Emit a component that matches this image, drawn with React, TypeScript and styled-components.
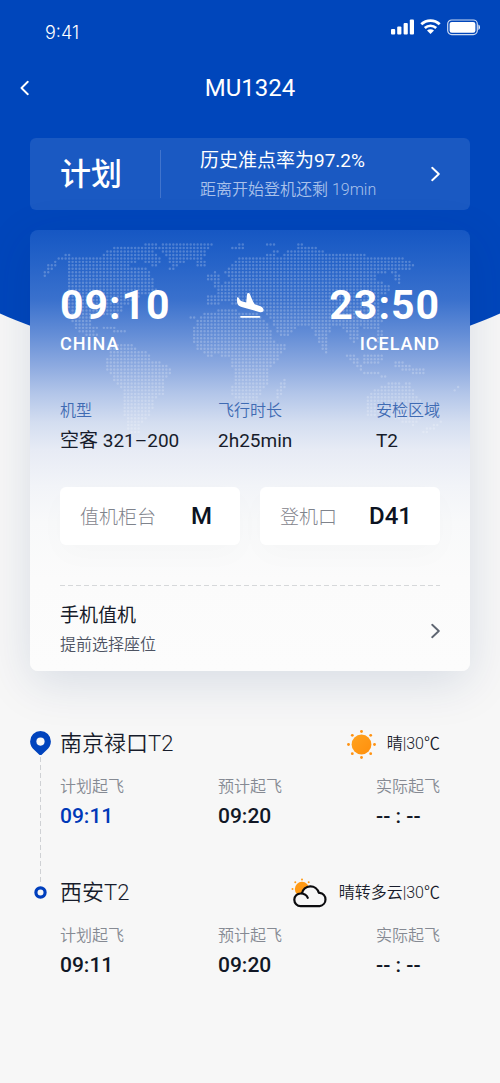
import React from "react";
import styled, { createGlobalStyle } from "styled-components";

const sans = `Roboto, "Noto Sans CJK SC", sans-serif`;

const GlobalStyle = createGlobalStyle`
  *, *::before, *::after { box-sizing: border-box; }
  body {
    margin: 0;
    background: #f7f7f7;
    color: #171c2b;
    font-family: ${sans};
  }
  h1, h2, p, dl, dd, ol { margin: 0; padding: 0; }
  button { border: 0; padding: 0; background: none; color: inherit; font: inherit; text-align: left; cursor: pointer; }
`;

const Page = styled.div`
  position: relative;
  min-height: 100vh;
  overflow: hidden;
  padding-bottom: 60px;
`;

const Backdrop = styled.div`
  position: absolute;
  inset: 0 0 auto 0;
  height: 367px;
  overflow: hidden;
  &::before {
    content: "";
    position: absolute;
    left: -72%;
    bottom: 0;
    width: 244%;
    height: 1220px;
    border-radius: 50%;
    background: #0046bb;
  }
`;

const Content = styled.div`
  position: relative;
`;

const StatusBar = styled.div`
  display: flex;
  justify-content: space-between;
  align-items: flex-start;
  height: 68px;
  padding: 16px 20px 0 45px;
  color: #fff;
`;

const Clock = styled.time`
  padding-top: 5px;
  font: 300 18px/24px Inter, sans-serif;
`;

const StatusIcons = styled.div`
  display: flex;
  align-items: center;
  gap: 6px;
  height: 22px;
`;

const NavBar = styled.header`
  display: grid;
  grid-template-columns: 40px 1fr 40px;
  align-items: center;
  height: 40px;
  padding: 0 20px;
  color: #fff;
`;

const NavTitle = styled.h1`
  text-align: center;
  font: 400 24px/40px ${sans};
`;

const IconButton = styled.button`
  display: flex;
  align-items: center;
  height: 40px;
`;

const Main = styled.main`
  padding: 30px 30px 0;
`;

const PlanCard = styled.button`
  display: flex;
  align-items: center;
  width: 100%;
  height: 72px;
  padding: 0 30px;
  border-radius: 6px;
  background: #1a59c2;
  color: #fff;
`;

const PlanTitle = styled.strong`
  padding-top: 2px;
  font-size: 31px;
  line-height: 40px;
  font-weight: 500;
`;

const PlanDivider = styled.span`
  width: 1px;
  height: 48px;
  margin: 0 39px 0 38px;
  background: #4174cd;
`;

const TextStack = styled.span`
  display: flex;
  flex: 1;
  flex-direction: column;
  gap: 5px;
`;

const PlanText = styled(TextStack)`
  padding-top: 2px;
`;

const LineTitle = styled.span`
  font-size: 19px;
  line-height: 24px;
  font-weight: 400;
`;

const LineNote = styled.span<{ $color: string }>`
  font-size: 16px;
  line-height: 24px;
  font-weight: 350;
  color: ${(p) => p.$color};
`;

const FlightCard = styled.section`
  position: relative;
  margin-top: 20px;
  padding: 50px 30px 0;
  border-radius: 8px;
  background: linear-gradient(
    180deg,
    #1657c3 0,
    #2160c7 24px,
    #3a71cd 70px,
    #668fd7 106px,
    #8daae0 136px,
    #b3c6e9 164px,
    #d3ddf0 192px,
    #e7ebf5 220px,
    #f2f4f8 256px,
    #f8f9fa 292px,
    #fbfbfb 350px,
    #fcfcfc 100%
  );
  box-shadow: 0 12px 48px rgba(10, 45, 105, 0.13);
`;

const MapArt = styled.svg`
  position: absolute;
  top: 0;
  left: 0;
  width: 100%;
`;

const Route = styled.div`
  position: relative;
  display: grid;
  grid-template-columns: 1fr auto 1fr;
  color: #fff;
`;

const Endpoint = styled.div<{ $end?: boolean }>`
  display: flex;
  flex-direction: column;
  gap: 1px;
  align-items: ${(p) => (p.$end ? "flex-end" : "flex-start")};
`;

const RouteTime = styled.time`
  font: 700 41px/50px ${sans};
  letter-spacing: 1px;
`;

const Country = styled.span`
  font: 500 18px/26px ${sans};
  letter-spacing: 1px;
`;

const PlaneBox = styled.div`
  display: flex;
  align-items: center;
  height: 50px;
`;

const Columns = styled.dl`
  position: relative;
  display: grid;
  grid-template-columns: 1fr 1fr 64px;
`;

const FlightFacts = styled(Columns)`
  margin-top: 42px;
`;

const Fact = styled.div<{ $gap: number }>`
  display: flex;
  flex-direction: column;
  gap: ${(p) => p.$gap}px;
  white-space: nowrap;
`;

const FactLabel = styled.dt<{ $color: string }>`
  font-size: 16px;
  line-height: 24px;
  font-weight: 350;
  color: ${(p) => p.$color};
`;

const FactValue = styled.dd`
  font-size: 19px;
  line-height: 24px;
  font-weight: 400;
`;

const FactTime = styled.dd<{ $active?: boolean }>`
  font: 500 21px/24px ${sans};
  color: ${(p) => (p.$active ? "#0038b8" : "#111726")};
`;

const Tiles = styled.dl`
  position: relative;
  display: grid;
  grid-template-columns: 1fr 1fr;
  gap: 20px;
  margin-top: 34px;
`;

const Tile = styled.div`
  display: flex;
  align-items: center;
  justify-content: space-between;
  height: 58px;
  padding: 0 28px 0 20px;
  border-radius: 6px;
  background: #fff;
  box-shadow: 0 10px 30px rgba(0, 0, 0, 0.02);
`;

const TileLabel = styled.dt`
  padding-top: 4px;
  font-size: 19px;
  line-height: 24px;
  font-weight: 300;
  color: #7f838c;
`;

const TileValue = styled.dd`
  font: 500 24px/32px ${sans};
  color: #0c1322;
`;

const DashedRule = styled.hr`
  height: 1px;
  margin: 40px 0 0;
  border: 0;
  background: repeating-linear-gradient(90deg, #d6d8da 0 5px, transparent 5px 8px);
`;

const CheckInButton = styled.button`
  display: flex;
  align-items: center;
  width: 100%;
  padding: 18px 0 14px;
`;

const Stops = styled.ol`
  margin-top: 57px;
  padding-right: 30px;
  list-style: none;
`;

const Stop = styled.li`
  display: grid;
  grid-template-columns: 21px 1fr;
  column-gap: 9px;
`;

const Rail = styled.div<{ $top: number }>`
  display: flex;
  flex-direction: column;
  align-items: center;
  padding-top: ${(p) => p.$top}px;
`;

const RailLine = styled.span`
  flex: 1;
  width: 1px;
  margin: 2px 0 -8px;
  background: repeating-linear-gradient(180deg, #cfd1d4 0 5px, transparent 5px 8px);
`;

const StopBody = styled.div<{ $last: boolean }>`
  padding-bottom: ${(p) => (p.$last ? 0 : 49)}px;
`;

const StopHead = styled.div`
  display: flex;
  align-items: center;
  justify-content: space-between;
  height: 32px;
  margin-bottom: 15px;
`;

const StopName = styled.h2`
  font-size: 22px;
  line-height: 32px;
  font-weight: 350;
`;

const Weather = styled.p`
  display: flex;
  align-items: center;
  gap: 11px;
  font-size: 16px;
  line-height: 24px;
  font-weight: 350;
`;

/* Outlines of the land areas; each one is filled with grid dots. */
const land: string[] = [
  "30,162 40,138 60,115 85,95 115,85 130,92 215,94 225,78 265,63 340,62 345,53 382,53 385,70 370,80 395,105 395,118 370,128 350,112 325,102 300,125 310,130 345,128 360,145 372,162 382,200 350,212 335,205 325,220 300,235 285,245 270,262 272,285 258,280 240,268 200,270 185,285 190,305 205,300 205,315 195,320 205,335 165,332 145,318 130,300 122,285 115,235 113,100 85,108 65,140 48,158",
  "385,62 400,55 548,54 530,78 525,98 490,105 455,112 438,134 412,134 425,120 408,95 385,75",
  "498,106 528,106 528,126 498,124",
  "603,64 622,64 625,54 643,54 643,74 603,74",
  "212,304 240,304 290,314 290,326 262,324 235,312 212,312",
  "235,362 275,354 305,357 320,372 358,382 365,402 425,428 426,448 402,470 402,505 378,522 366,560 348,580 335,602 328,630 300,632 285,590 280,500 255,470 228,435 228,405 240,390",
  "532,152 552,138 572,150 568,178 532,170",
  "532,210 575,208 575,240 532,240",
  "480,270 498,270 498,282 480,282",
  "490,352 492,300 525,262 545,262 575,246 600,248 625,258 660,262 695,268 715,300 735,350 768,356 768,370 745,400 720,430 716,482 698,492 680,528 640,546 625,522 603,515 612,440 600,400 560,388 535,398 505,375",
  "583,140 605,115 625,95 690,93 720,85 750,92 775,74 840,62 870,72 900,84 960,84 1010,90 1040,90 1100,94 1130,104 1158,118 1150,128 1130,136 1100,132 1112,152 1110,178 1092,165 1082,140 1050,145 1032,160 1075,178 1082,198 1060,208 1045,225 1056,292 1032,315 990,308 985,345 970,355 955,330 930,305 912,300 898,325 892,385 876,378 862,345 846,312 820,302 800,300 792,325 755,340 735,312 715,275 690,255 640,245 610,240 575,225 560,205 552,182 600,165 590,150",
  "705,54 740,54 740,64 715,64",
  "800,54 818,54 818,64 800,64",
  "718,90 730,75 750,72 750,84",
  "945,388 965,385 990,410 1000,438 1070,446 1070,458 1000,448 970,420",
  "1002,392 1045,382 1064,386 1062,404 1045,422 1002,416",
  "1038,302 1052,302 1062,350 1058,368 1042,348",
  "1096,410 1120,412 1150,430 1188,428 1180,452 1140,442 1096,426",
  "1008,512 1040,490 1080,468 1112,474 1124,492 1132,456 1148,490 1178,535 1178,575 1150,602 1112,592 1060,565 1008,578",
  "740,518 742,490 762,458 770,474 758,512",
  "1166,624 1200,604 1236,584 1240,594 1180,630",
  "1264,500 1278,480 1292,480 1276,500",
];

const shapes = land.map((s) => s.split(" ").map((p) => p.split(",").map(Number)));

function inside(x: number, y: number, shape: number[][]) {
  let hit = false;
  for (let i = 0, j = shape.length - 1; i < shape.length; j = i++) {
    const [xi, yi] = shape[i];
    const [xj, yj] = shape[j];
    if (yi > y !== yj > y && x < ((xj - xi) * (y - yi)) / (yj - yi) + xi) hit = !hit;
  }
  return hit;
}

function buildDots() {
  const step = 10.42;
  let d = "";
  for (let r = 0; r < 57; r++) {
    for (let c = 0; c < 124; c++) {
      const x = 34 + c * step;
      const y = 58.5 + r * step;
      if (shapes.some((s) => inside(x, y, s))) d += `M${x.toFixed(1)} ${y.toFixed(1)}h0`;
    }
  }
  return d;
}

const dots = buildDots();

const WorldMap = () => (
  <MapArt viewBox="0 15 1320 660" aria-hidden="true">
    <path d={dots} stroke="#fff" strokeOpacity="0.22" strokeWidth="7.4" strokeLinecap="round" />
  </MapArt>
);

const Chevron = ({ left, color }: { left?: boolean; color: string }) => (
  <svg width="9" height="16" viewBox="0 0 9 16" fill="none" aria-hidden="true">
    <path
      d={left ? "M7.8 1.8 1.5 8l6.3 6.2" : "M1.2 1.8 7.8 8l-6.6 6.2"}
      stroke={color}
      strokeWidth="1.9"
      strokeLinecap="round"
      strokeLinejoin="round"
    />
  </svg>
);

const Signal = () => (
  <svg width="23" height="16" viewBox="0 0 23 16" fill="#fff" aria-hidden="true">
    <rect x="0" y="10" width="4.2" height="5.5" rx="1" />
    <rect x="6.2" y="7.5" width="4.2" height="8" rx="1" />
    <rect x="12.6" y="4" width="4.2" height="11.5" rx="1" />
    <rect x="18.8" y="0.5" width="4.2" height="15" rx="1" />
  </svg>
);

const Wifi = () => (
  <svg width="21" height="16" viewBox="0 0 21 16" fill="none" stroke="#fff" aria-hidden="true">
    <path d="M1.3 5.3a13.2 13.2 0 0 1 18.4 0" strokeWidth="2.7" />
    <path d="M4.8 9a8.2 8.2 0 0 1 11.4 0" strokeWidth="2.6" />
    <path d="M7 11.6a5 5 0 0 1 7 0L10.5 15z" fill="#fff" stroke="none" />
  </svg>
);

const Battery = () => (
  <svg width="33" height="17" viewBox="0 0 33 17" aria-hidden="true">
    <rect x="0.7" y="1" width="29.6" height="14.6" rx="4" fill="none" stroke="#fff" strokeOpacity="0.8" strokeWidth="1.2" />
    <rect x="2.6" y="2.9" width="25.8" height="10.8" rx="2.2" fill="#fff" />
    <path d="M31.4 5.5c1 .5 1.6 1.5 1.6 2.8s-.6 2.3-1.6 2.8z" fill="#fff" fillOpacity="0.9" />
  </svg>
);

const Plane = () => (
  <svg width="28" height="28" viewBox="0 0 28 28" fill="#fff" aria-hidden="true">
    <path d="M1 6.2 2.9 6.8C3.5 8.5 4.3 9.7 5.8 10.3L10.2 11.4 11.1 3.2C11.3 1.700 13.300 1.700 14 3.200 15.300 6.600 16.800 10.200 18.700 13.300L24.500 15.300C26.600 16.200 27.700 17.700 27.600 19.200 27.400 21 25.600 21.500 23.200 20.900L6.500 16.300C3.200 15.400 1.300 13.800 1.100 11.200z" />
    <rect x="4.2" y="25" width="20" height="1.8" rx="0.8" />
  </svg>
);

const Pin = () => (
  <svg width="21" height="24" viewBox="0 0 21 24" aria-hidden="true">
    <path d="M10.5 0a10.4 10.4 0 0 1 10.4 10.4c0 3.7-1.9 6.5-4.5 8.9l-4.2 4a2.4 2.4 0 0 1-3.4 0l-4.2-4C2 16.9.1 14.1.1 10.4A10.4 10.4 0 0 1 10.5 0z" fill="#0043bd" />
    <circle cx="10.5" cy="10.6" r="4.1" fill="#f7f7f7" />
  </svg>
);

const Ring = () => (
  <svg width="13" height="13" viewBox="0 0 13 13" aria-hidden="true">
    <circle cx="6.5" cy="6.5" r="4.6" fill="#f7f7f7" stroke="#003fbd" strokeWidth="3.2" />
  </svg>
);

const rays = [0, 1, 2, 3, 4, 5, 6, 7].map((i) => (i * Math.PI) / 4);

const Sun = () => (
  <svg width="29" height="29" viewBox="0 0 29 29" aria-hidden="true">
    <defs>
      <linearGradient id="sunFill" x1="0" y1="0" x2="1" y2="1">
        <stop offset="0" stopColor="#ffa31f" />
        <stop offset="1" stopColor="#ff8f0c" />
      </linearGradient>
    </defs>
    <circle cx="14.5" cy="14.5" r="9.9" fill="url(#sunFill)" />
    {rays.map((a) => (
      <circle key={a} cx={14.5 + 13 * Math.cos(a)} cy={14.5 + 13 * Math.sin(a)} r="1.4" fill="#ff9212" />
    ))}
  </svg>
);

const SunCloud = () => (
  <svg width="37" height="30" viewBox="0 0 37 30" aria-hidden="true">
    <circle cx="11" cy="11" r="7.2" fill="#ff9914" />
    {rays.slice(4).map((a) => (
      <circle key={a} cx={11 + 9.5 * Math.cos(a)} cy={11 + 9.5 * Math.sin(a)} r="1" fill="#ff9914" />
    ))}
    <path
      d="M16.8 19.8c-1.2-2.9-4-4.3-7.2-4.3a6.3 6.3 0 0 0 0 12.6h19a6.7 6.7 0 0 0 0-13.3h-.8A8.6 8.6 0 0 0 11 15.4"
      fill="#f7f7f7"
    />
    <path
      d="M16.800 19.800c-1.200-2.900-4-4.300-7.200-4.300a6.300 6.300 0 0 0 0 12.600h19a6.700 6.700 0 0 0 0-13.300h-.8A8.600 8.600 0 0 0 11 15.400"
      fill="none"
      stroke="#0c0c0f"
      strokeWidth="2.2"
      strokeLinecap="round"
      strokeLinejoin="round"
    />
  </svg>
);

const flightFacts = [
  ["机型", "空客 321–200"],
  ["飞行时长", "2h25min"],
  ["安检区域", "T2"],
];

const stops = [
  { name: "南京禄口T2", weather: "晴|30℃", icon: <Sun />, active: true },
  { name: "西安T2", weather: "晴转多云|30℃", icon: <SunCloud />, active: false },
];

const stopTimes = [
  ["计划起飞", "09:11"],
  ["预计起飞", "09:20"],
  ["实际起飞", "-- : --"],
];

export default function App() {
  return (
    <Page>
      <GlobalStyle />
      <Backdrop />
      <Content>
        <StatusBar>
          <Clock>9:41</Clock>
          <StatusIcons>
            <Signal />
            <Wifi />
            <Battery />
          </StatusIcons>
        </StatusBar>
        <NavBar>
          <IconButton type="button" aria-label="返回">
            <Chevron left color="#fff" />
          </IconButton>
          <NavTitle>MU1324</NavTitle>
        </NavBar>
        <Main>
          <PlanCard type="button">
            <PlanTitle>计划</PlanTitle>
            <PlanDivider />
            <PlanText>
              <LineTitle>历史准点率为97.2%</LineTitle>
              <LineNote $color="#a9c1ea">距离开始登机还剩 19min</LineNote>
            </PlanText>
            <Chevron color="#fff" />
          </PlanCard>

          <FlightCard>
            <WorldMap />
            <Route>
              <Endpoint>
                <RouteTime>09:10</RouteTime>
                <Country>CHINA</Country>
              </Endpoint>
              <PlaneBox>
                <Plane />
              </PlaneBox>
              <Endpoint $end>
                <RouteTime>23:50</RouteTime>
                <Country>ICELAND</Country>
              </Endpoint>
            </Route>
            <FlightFacts>
              {flightFacts.map(([label, value]) => (
                <Fact key={label} $gap={6}>
                  <FactLabel $color="#3f6bb3">{label}</FactLabel>
                  <FactValue>{value}</FactValue>
                </Fact>
              ))}
            </FlightFacts>
            <Tiles>
              <Tile>
                <TileLabel>值机柜台</TileLabel>
                <TileValue>M</TileValue>
              </Tile>
              <Tile>
                <TileLabel>登机口</TileLabel>
                <TileValue>D41</TileValue>
              </Tile>
            </Tiles>
            <DashedRule />
            <CheckInButton type="button">
              <TextStack>
                <LineTitle>手机值机</LineTitle>
                <LineNote $color="#4d5362">提前选择座位</LineNote>
              </TextStack>
              <Chevron color="#5f6672" />
            </CheckInButton>
          </FlightCard>

          <Stops>
            {stops.map((stop, i) => {
              const last = i === stops.length - 1;
              return (
                <Stop key={stop.name}>
                  <Rail $top={last ? 9 : 3}>
                    {last ? <Ring /> : <Pin />}
                    {!last && <RailLine />}
                  </Rail>
                  <StopBody $last={last}>
                    <StopHead>
                      <StopName>{stop.name}</StopName>
                      <Weather>
                        {stop.icon}
                        <span>{stop.weather}</span>
                      </Weather>
                    </StopHead>
                    <Columns>
                      {stopTimes.map(([label, value], n) => (
                        <Fact key={label} $gap={5}>
                          <FactLabel $color="#868a93">{label}</FactLabel>
                          <FactTime $active={stop.active && n === 0}>{value}</FactTime>
                        </Fact>
                      ))}
                    </Columns>
                  </StopBody>
                </Stop>
              );
            })}
          </Stops>
        </Main>
      </Content>
    </Page>
  );
}
